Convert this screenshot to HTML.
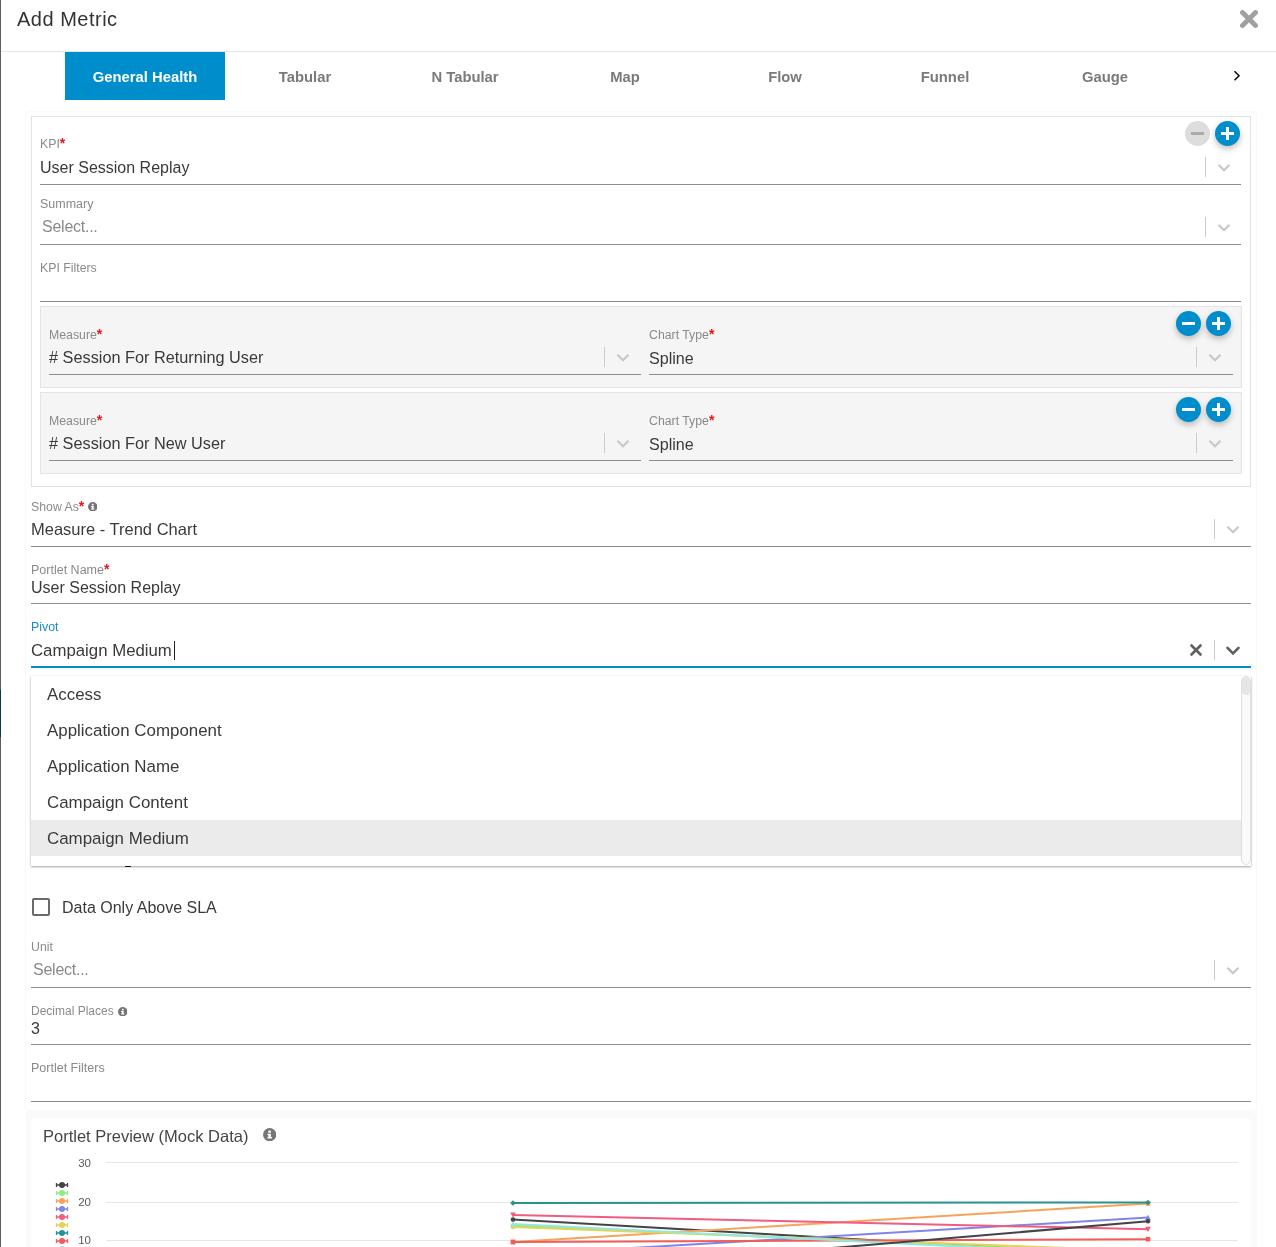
<!DOCTYPE html><html><head><meta charset="utf-8"><style>
html,body{margin:0;padding:0;}
body{width:1276px;height:1247px;overflow:hidden;position:relative;background:#fff;font-family:"Liberation Sans",sans-serif;}
.t{position:absolute;white-space:nowrap;line-height:1;will-change:transform;}
.r{position:absolute;}
</style></head><body>
<div class="r" style="left:0px;top:0px;width:1px;height:1247px;background:#5e5e5e"></div>
<div class="r" style="left:0px;top:690px;width:1px;height:47px;background:#0b3550"></div>
<div class="t" style="left:17px;top:8.67px;font-size:20px;color:#333;letter-spacing:0.5px;">Add Metric</div>
<svg class="r" style="left:1240px;top:10px" width="18" height="18" viewBox="0 0 18 18"><path d="M2.5 2.5 L15.5 15.5 M15.5 2.5 L2.5 15.5" stroke="#a0a0a0" stroke-width="4.8" stroke-linecap="round"/></svg>
<div class="r" style="left:1px;top:51px;width:1275px;height:1px;background:#e6e6e6"></div>
<div class="r" style="left:65px;top:52px;width:160px;height:48px;background:#008dcb"></div>
<div class="t" style="left:-155px;width:600px;text-align:center;top:69.67px;font-size:14.8px;color:#fff;font-weight:bold;">General Health</div>
<div class="t" style="left:5px;width:600px;text-align:center;top:69.67px;font-size:14.8px;color:#7a7a7a;font-weight:bold;">Tabular</div>
<div class="t" style="left:165px;width:600px;text-align:center;top:69.67px;font-size:14.8px;color:#7a7a7a;font-weight:bold;">N Tabular</div>
<div class="t" style="left:325px;width:600px;text-align:center;top:69.67px;font-size:14.8px;color:#7a7a7a;font-weight:bold;">Map</div>
<div class="t" style="left:485px;width:600px;text-align:center;top:69.67px;font-size:14.8px;color:#7a7a7a;font-weight:bold;">Flow</div>
<div class="t" style="left:645px;width:600px;text-align:center;top:69.67px;font-size:14.8px;color:#7a7a7a;font-weight:bold;">Funnel</div>
<div class="t" style="left:805px;width:600px;text-align:center;top:69.67px;font-size:14.8px;color:#7a7a7a;font-weight:bold;">Gauge</div>
<svg class="r" style="left:1232px;top:69px" width="10" height="13" viewBox="0 0 10 13"><path d="M2.5 2.2 L7 6.7 L2.5 11.2" fill="none" stroke="#111" stroke-width="1.6"/></svg>
<div class="r" style="left:25px;top:111px;width:1232px;height:1000px;border:1px solid #f9f9f9;border-radius:4px;box-sizing:border-box;"></div>
<div class="r" style="left:31px;top:116px;width:1220px;height:371px;border:1px solid #e2e2e2;box-sizing:border-box;"></div>
<div class="r" style="left:1185.0px;top:121.0px;width:25px;height:25px;border-radius:50%;background:#dddddd;"></div>
<div class="r" style="left:1191.0px;top:132.0px;width:13px;height:3px;background:#ababab"></div>
<div class="r" style="left:1215.0px;top:121.0px;width:25px;height:25px;border-radius:50%;background:#008dcb;box-shadow:0 3px 6px rgba(0,0,0,0.25);"></div>
<div class="r" style="left:1221.0px;top:132.0px;width:13px;height:3px;background:#fff"></div>
<div class="r" style="left:1226.0px;top:127.0px;width:3px;height:13px;background:#fff"></div>
<div class="t" style="left:40px;top:137.99px;font-size:12.3px;color:#8a8a8a;">KPI<span style="color:#e8141c;font-weight:bold;font-size:14px;line-height:0">*</span></div>
<div class="t" style="left:40px;top:159.66px;font-size:16px;color:#3a3a3a;">User Session Replay</div>
<div class="r" style="left:1205px;top:157px;width:1px;height:20px;background:#cccccc"></div>
<svg class="r" style="left:1217px;top:163px" width="14" height="10" viewBox="0 0 14 10"><path d="M1.5 1.8 L7 7.3 L12.5 1.8" fill="none" stroke="#c8c8c8" stroke-width="2.2"/></svg>
<div class="r" style="left:40px;top:184px;width:1201px;height:1px;background:#8c8c8c"></div>
<div class="t" style="left:40px;top:198.02px;font-size:12.5px;color:#8a8a8a;">Summary</div>
<div class="t" style="left:42px;top:219.36px;font-size:16px;color:#8a8a8a;letter-spacing:-0.25px;">Select...</div>
<div class="r" style="left:1205px;top:217px;width:1px;height:20px;background:#cccccc"></div>
<svg class="r" style="left:1217px;top:223px" width="14" height="10" viewBox="0 0 14 10"><path d="M1.5 1.8 L7 7.3 L12.5 1.8" fill="none" stroke="#c8c8c8" stroke-width="2.2"/></svg>
<div class="r" style="left:40px;top:244px;width:1201px;height:1px;background:#8c8c8c"></div>
<div class="t" style="left:40px;top:261.99px;font-size:12.3px;color:#8a8a8a;">KPI Filters</div>
<div class="r" style="left:40px;top:301px;width:1201px;height:1px;background:#8c8c8c"></div>
<div class="r" style="left:40px;top:306px;width:1202px;height:82px;background:#f5f5f5;border:1px solid #e4e4e4;box-sizing:border-box;"></div>
<div class="r" style="left:1176.0px;top:310.9px;width:25px;height:25px;border-radius:50%;background:#008dcb;box-shadow:0 3px 6px rgba(0,0,0,0.25);"></div>
<div class="r" style="left:1182.0px;top:321.9px;width:13px;height:3px;background:#fff"></div>
<div class="r" style="left:1206.0px;top:310.9px;width:25px;height:25px;border-radius:50%;background:#008dcb;box-shadow:0 3px 6px rgba(0,0,0,0.25);"></div>
<div class="r" style="left:1212.0px;top:321.9px;width:13px;height:3px;background:#fff"></div>
<div class="r" style="left:1217.0px;top:316.9px;width:3px;height:13px;background:#fff"></div>
<div class="t" style="left:49px;top:328.89px;font-size:12.3px;color:#8a8a8a;">Measure<span style="color:#e8141c;font-weight:bold;font-size:14px;line-height:0">*</span></div>
<div class="t" style="left:49px;top:349.40px;font-size:16.3px;color:#3a3a3a;"># Session For Returning User</div>
<div class="r" style="left:604px;top:347px;width:1px;height:20px;background:#cccccc"></div>
<svg class="r" style="left:616px;top:353px" width="14" height="10" viewBox="0 0 14 10"><path d="M1.5 1.8 L7 7.3 L12.5 1.8" fill="none" stroke="#c8c8c8" stroke-width="2.2"/></svg>
<div class="r" style="left:49px;top:374px;width:592px;height:1px;background:#8c8c8c"></div>
<div class="t" style="left:649px;top:328.89px;font-size:12.3px;color:#8a8a8a;">Chart Type<span style="color:#e8141c;font-weight:bold;font-size:14px;line-height:0">*</span></div>
<div class="t" style="left:649px;top:349.57px;font-size:16.1px;color:#3a3a3a;">Spline</div>
<div class="r" style="left:1196px;top:347px;width:1px;height:20px;background:#cccccc"></div>
<svg class="r" style="left:1208px;top:353px" width="14" height="10" viewBox="0 0 14 10"><path d="M1.5 1.8 L7 7.3 L12.5 1.8" fill="none" stroke="#c8c8c8" stroke-width="2.2"/></svg>
<div class="r" style="left:649px;top:374px;width:584px;height:1px;background:#8c8c8c"></div>
<div class="r" style="left:40px;top:392px;width:1202px;height:82px;background:#f5f5f5;border:1px solid #e4e4e4;box-sizing:border-box;"></div>
<div class="r" style="left:1176.0px;top:396.9px;width:25px;height:25px;border-radius:50%;background:#008dcb;box-shadow:0 3px 6px rgba(0,0,0,0.25);"></div>
<div class="r" style="left:1182.0px;top:407.9px;width:13px;height:3px;background:#fff"></div>
<div class="r" style="left:1206.0px;top:396.9px;width:25px;height:25px;border-radius:50%;background:#008dcb;box-shadow:0 3px 6px rgba(0,0,0,0.25);"></div>
<div class="r" style="left:1212.0px;top:407.9px;width:13px;height:3px;background:#fff"></div>
<div class="r" style="left:1217.0px;top:402.9px;width:3px;height:13px;background:#fff"></div>
<div class="t" style="left:49px;top:414.89px;font-size:12.3px;color:#8a8a8a;">Measure<span style="color:#e8141c;font-weight:bold;font-size:14px;line-height:0">*</span></div>
<div class="t" style="left:49px;top:435.40px;font-size:16.3px;color:#3a3a3a;"># Session For New User</div>
<div class="r" style="left:604px;top:433px;width:1px;height:20px;background:#cccccc"></div>
<svg class="r" style="left:616px;top:439px" width="14" height="10" viewBox="0 0 14 10"><path d="M1.5 1.8 L7 7.3 L12.5 1.8" fill="none" stroke="#c8c8c8" stroke-width="2.2"/></svg>
<div class="r" style="left:49px;top:460px;width:592px;height:1px;background:#8c8c8c"></div>
<div class="t" style="left:649px;top:414.89px;font-size:12.3px;color:#8a8a8a;">Chart Type<span style="color:#e8141c;font-weight:bold;font-size:14px;line-height:0">*</span></div>
<div class="t" style="left:649px;top:435.57px;font-size:16.1px;color:#3a3a3a;">Spline</div>
<div class="r" style="left:1196px;top:433px;width:1px;height:20px;background:#cccccc"></div>
<svg class="r" style="left:1208px;top:439px" width="14" height="10" viewBox="0 0 14 10"><path d="M1.5 1.8 L7 7.3 L12.5 1.8" fill="none" stroke="#c8c8c8" stroke-width="2.2"/></svg>
<div class="r" style="left:649px;top:460px;width:584px;height:1px;background:#8c8c8c"></div>
<div class="t" style="left:31px;top:500.69px;font-size:12.3px;color:#8a8a8a;">Show As<span style="color:#e8141c;font-weight:bold;font-size:14px;line-height:0">*</span></div>
<svg class="r" style="left:87.75px;top:501.75px" width="9.5" height="9.5" viewBox="0 0 20 20"><circle cx="10" cy="10" r="10" fill="#767676"/><rect x="8.1" y="3.9" width="3.8" height="3.4" rx="1" fill="#fff"/><path d="M6.6 8.6 H11.9 V13.6 H13.4 V15.9 H6.6 V13.6 H8.1 V10.6 H6.6 Z" fill="#fff"/></svg>
<div class="t" style="left:31px;top:521.23px;font-size:16.5px;color:#3a3a3a;">Measure - Trend Chart</div>
<div class="r" style="left:1214px;top:519px;width:1px;height:20px;background:#cccccc"></div>
<svg class="r" style="left:1226px;top:525px" width="14" height="10" viewBox="0 0 14 10"><path d="M1.5 1.8 L7 7.3 L12.5 1.8" fill="none" stroke="#c8c8c8" stroke-width="2.2"/></svg>
<div class="r" style="left:31px;top:546px;width:1220px;height:1px;background:#8c8c8c"></div>
<div class="t" style="left:31px;top:564.32px;font-size:12.5px;color:#8a8a8a;">Portlet Name<span style="color:#e8141c;font-weight:bold;font-size:14px;line-height:0">*</span></div>
<div class="t" style="left:31px;top:579.56px;font-size:16px;color:#3a3a3a;">User Session Replay</div>
<div class="r" style="left:31px;top:603px;width:1220px;height:1px;background:#8c8c8c"></div>
<div class="t" style="left:31px;top:621.30px;font-size:12.4px;color:#1b8ac9;">Pivot</div>
<div class="t" style="left:31px;top:642.78px;font-size:16.8px;color:#3a3a3a;">Campaign Medium</div>
<div class="r" style="left:174px;top:641px;width:1px;height:19px;background:#222"></div>
<svg class="r" style="left:1189px;top:643px" width="14" height="14" viewBox="0 0 14 14"><path d="M2.5 2.5 L11.5 11.5 M11.5 2.5 L2.5 11.5" stroke="#5f5f5f" stroke-width="2.6" stroke-linecap="round"/></svg>
<div class="r" style="left:1214px;top:640px;width:1px;height:20px;background:#cccccc"></div>
<svg class="r" style="left:1226px;top:646px" width="14" height="10" viewBox="0 0 14 10"><path d="M1.5 1.8 L7 7.3 L12.5 1.8" fill="none" stroke="#5f5f5f" stroke-width="2.6" stroke-linecap="round"/></svg>
<div class="r" style="left:31px;top:666px;width:1220px;height:2px;background:#008dcb"></div>
<div class="r" style="left:32px;top:898px;width:18px;height:18px;border:2px solid #6a6a6a;border-radius:2px;box-sizing:border-box;"></div>
<div class="t" style="left:62px;top:899.66px;font-size:16px;color:#3a3a3a;">Data Only Above SLA</div>
<div class="t" style="left:31px;top:941.39px;font-size:12.3px;color:#8a8a8a;">Unit</div>
<div class="t" style="left:33px;top:962.36px;font-size:16px;color:#8a8a8a;letter-spacing:-0.25px;">Select...</div>
<div class="r" style="left:1214px;top:960px;width:1px;height:20px;background:#cccccc"></div>
<svg class="r" style="left:1226px;top:966px" width="14" height="10" viewBox="0 0 14 10"><path d="M1.5 1.8 L7 7.3 L12.5 1.8" fill="none" stroke="#c8c8c8" stroke-width="2.2"/></svg>
<div class="r" style="left:31px;top:987px;width:1220px;height:1px;background:#8c8c8c"></div>
<div class="t" style="left:31px;top:1005.04px;font-size:12px;color:#8a8a8a;">Decimal Places</div>
<svg class="r" style="left:117.65px;top:1006.75px" width="9.5" height="9.5" viewBox="0 0 20 20"><circle cx="10" cy="10" r="10" fill="#767676"/><rect x="8.1" y="3.9" width="3.8" height="3.4" rx="1" fill="#fff"/><path d="M6.6 8.6 H11.9 V13.6 H13.4 V15.9 H6.6 V13.6 H8.1 V10.6 H6.6 Z" fill="#fff"/></svg>
<div class="t" style="left:31px;top:1020.86px;font-size:16px;color:#3a3a3a;">3</div>
<div class="r" style="left:31px;top:1044px;width:1220px;height:1px;background:#8c8c8c"></div>
<div class="t" style="left:31px;top:1062.32px;font-size:12.5px;color:#8a8a8a;">Portlet Filters</div>
<div class="r" style="left:31px;top:1101px;width:1220px;height:1px;background:#8c8c8c"></div>
<div class="r" style="left:26px;top:1111px;width:1231px;height:200px;background:#fafafa;"></div>
<div class="r" style="left:31px;top:1118px;width:1220px;height:200px;background:#fff;border-radius:4px;"></div>
<div class="t" style="left:43px;top:1128.23px;font-size:16.5px;color:#454545;">Portlet Preview (Mock Data)</div>
<svg class="r" style="left:262.65000000000003px;top:1128.05px" width="13.3" height="13.3" viewBox="0 0 20 20"><circle cx="10" cy="10" r="10" fill="#767676"/><rect x="8.1" y="3.9" width="3.8" height="3.4" rx="1" fill="#fff"/><path d="M6.6 8.6 H11.9 V13.6 H13.4 V15.9 H6.6 V13.6 H8.1 V10.6 H6.6 Z" fill="#fff"/></svg>
<div class="t" style="left:-209.5px;width:300px;text-align:right;top:1157.87px;font-size:11.5px;color:#5a5a5a;">30</div>
<div class="t" style="left:-209.5px;width:300px;text-align:right;top:1197.17px;font-size:11.5px;color:#5a5a5a;">20</div>
<div class="t" style="left:-209.5px;width:300px;text-align:right;top:1234.77px;font-size:11.5px;color:#5a5a5a;">10</div>
<div class="r" style="left:106px;top:1162px;width:1132px;height:1px;background:#e6e6e6"></div>
<div class="r" style="left:106px;top:1202px;width:1132px;height:1px;background:#e6e6e6"></div>
<div class="r" style="left:106px;top:1240px;width:1132px;height:1px;background:#e6e6e6"></div>
<svg class="r" style="left:0;top:1118px" width="1276" height="129" viewBox="0 1118 1276 129"><path d="M56.5 1185 H67.5 M56.5 1183 V1187 M67.5 1183 V1187" stroke="#434348" stroke-width="1.3"/><circle cx="62" cy="1185" r="3" fill="#434348"/><path d="M56.5 1193 H67.5 M56.5 1191 V1195 M67.5 1191 V1195" stroke="#90ed7d" stroke-width="1.3"/><circle cx="62" cy="1193" r="3" fill="#90ed7d"/><path d="M56.5 1201 H67.5 M56.5 1199 V1203 M67.5 1199 V1203" stroke="#f7a35c" stroke-width="1.3"/><circle cx="62" cy="1201" r="3" fill="#f7a35c"/><path d="M56.5 1209 H67.5 M56.5 1207 V1211 M67.5 1207 V1211" stroke="#8085e9" stroke-width="1.3"/><circle cx="62" cy="1209" r="3" fill="#8085e9"/><path d="M56.5 1217 H67.5 M56.5 1215 V1219 M67.5 1215 V1219" stroke="#f15c80" stroke-width="1.3"/><circle cx="62" cy="1217" r="3" fill="#f15c80"/><path d="M56.5 1225 H67.5 M56.5 1223 V1227 M67.5 1223 V1227" stroke="#e4d354" stroke-width="1.3"/><circle cx="62" cy="1225" r="3" fill="#e4d354"/><path d="M56.5 1233 H67.5 M56.5 1231 V1235 M67.5 1231 V1235" stroke="#2b908f" stroke-width="1.3"/><circle cx="62" cy="1233" r="3" fill="#2b908f"/><path d="M56.5 1241 H67.5 M56.5 1239 V1243 M67.5 1239 V1243" stroke="#f45b5b" stroke-width="1.3"/><circle cx="62" cy="1241" r="3" fill="#f45b5b"/><path d="M56.5 1249 H67.5 M56.5 1247 V1251 M67.5 1247 V1251" stroke="#91e8e1" stroke-width="1.3"/><circle cx="62" cy="1249" r="3" fill="#91e8e1"/><path d="M513 1219.6 L1148 1256" stroke="#434348" stroke-width="2" fill="none"/><circle cx="513" cy="1219.6" r="2.3" fill="#434348"/><path d="M513 1225.5 L1148 1254" stroke="#90ed7d" stroke-width="2" fill="none"/><path d="M513 1222.7 L515.8 1225.5 L513 1228.3 L510.2 1225.5 Z" fill="#90ed7d"/><path d="M513 1242 L1148 1203.5" stroke="#f7a35c" stroke-width="2" fill="none"/><rect x="510.7" y="1239.7" width="4.6" height="4.6" fill="#f7a35c"/><rect x="1145.7" y="1201.2" width="4.6" height="4.6" fill="#f7a35c"/><path d="M513 1255 L1148 1217.6" stroke="#8085e9" stroke-width="2" fill="none"/><path d="M1148 1214.8 L1150.8 1220.0 L1145.2 1220.0 Z" fill="#8085e9"/><path d="M513 1215 L1148 1229.2" stroke="#f15c80" stroke-width="2" fill="none"/><path d="M513 1217.8 L515.8 1212.6 L510.2 1212.6 Z" fill="#f15c80"/><path d="M1148 1232.0 L1150.8 1226.8 L1145.2 1226.8 Z" fill="#f15c80"/><path d="M513 1227 L1148 1251" stroke="#e4d354" stroke-width="2" fill="none"/><circle cx="513" cy="1227" r="2.3" fill="#e4d354"/><path d="M513 1203 L1148 1202.5" stroke="#2b908f" stroke-width="2" fill="none"/><path d="M513 1200.2 L515.8 1203 L513 1205.8 L510.2 1203 Z" fill="#2b908f"/><path d="M1148 1199.7 L1150.8 1202.5 L1148 1205.3 L1145.2 1202.5 Z" fill="#2b908f"/><path d="M513 1242 L1148 1239.2" stroke="#f45b5b" stroke-width="2" fill="none"/><rect x="510.7" y="1239.7" width="4.6" height="4.6" fill="#f45b5b"/><rect x="1145.7" y="1236.9" width="4.6" height="4.6" fill="#f45b5b"/><path d="M513 1224 L1148 1256" stroke="#91e8e1" stroke-width="2" fill="none"/><path d="M513 1221.2 L515.8 1226.4 L510.2 1226.4 Z" fill="#91e8e1"/><path d="M513 1275 L1148 1221.3" stroke="#434348" stroke-width="2" fill="none"/><circle cx="1148" cy="1221.3" r="2.3" fill="#434348"/></svg>
<div class="r" style="left:31px;top:676px;width:1220px;height:190px;background:#fff;box-shadow:0 1px 2px rgba(0,0,0,0.35), 0 0 1px rgba(0,0,0,0.12);"></div>
<div class="r" style="left:31px;top:820px;width:1210px;height:36px;background:#ebebeb"></div>
<div class="t" style="left:47px;top:687.09px;font-size:16.9px;color:#3a3a3a;">Access</div>
<div class="t" style="left:47px;top:723.09px;font-size:16.9px;color:#3a3a3a;">Application Component</div>
<div class="t" style="left:47px;top:759.09px;font-size:16.9px;color:#3a3a3a;">Application Name</div>
<div class="t" style="left:47px;top:795.09px;font-size:16.9px;color:#3a3a3a;">Campaign Content</div>
<div class="t" style="left:47px;top:831.09px;font-size:16.9px;color:#3a3a3a;">Campaign Medium</div>
<div class="r" style="left:1241px;top:676px;width:10px;height:189px;background:#fafafa;border:1px solid #e0e0e0;border-radius:5px;box-sizing:border-box;"></div>
<div class="r" style="left:1242px;top:677px;width:8px;height:18px;background:#e6e6e6;border-radius:4px;"></div>
<div class="r" style="left:125px;top:866px;width:6px;height:1px;background:#111;border-radius:1px"></div>
</body></html>
